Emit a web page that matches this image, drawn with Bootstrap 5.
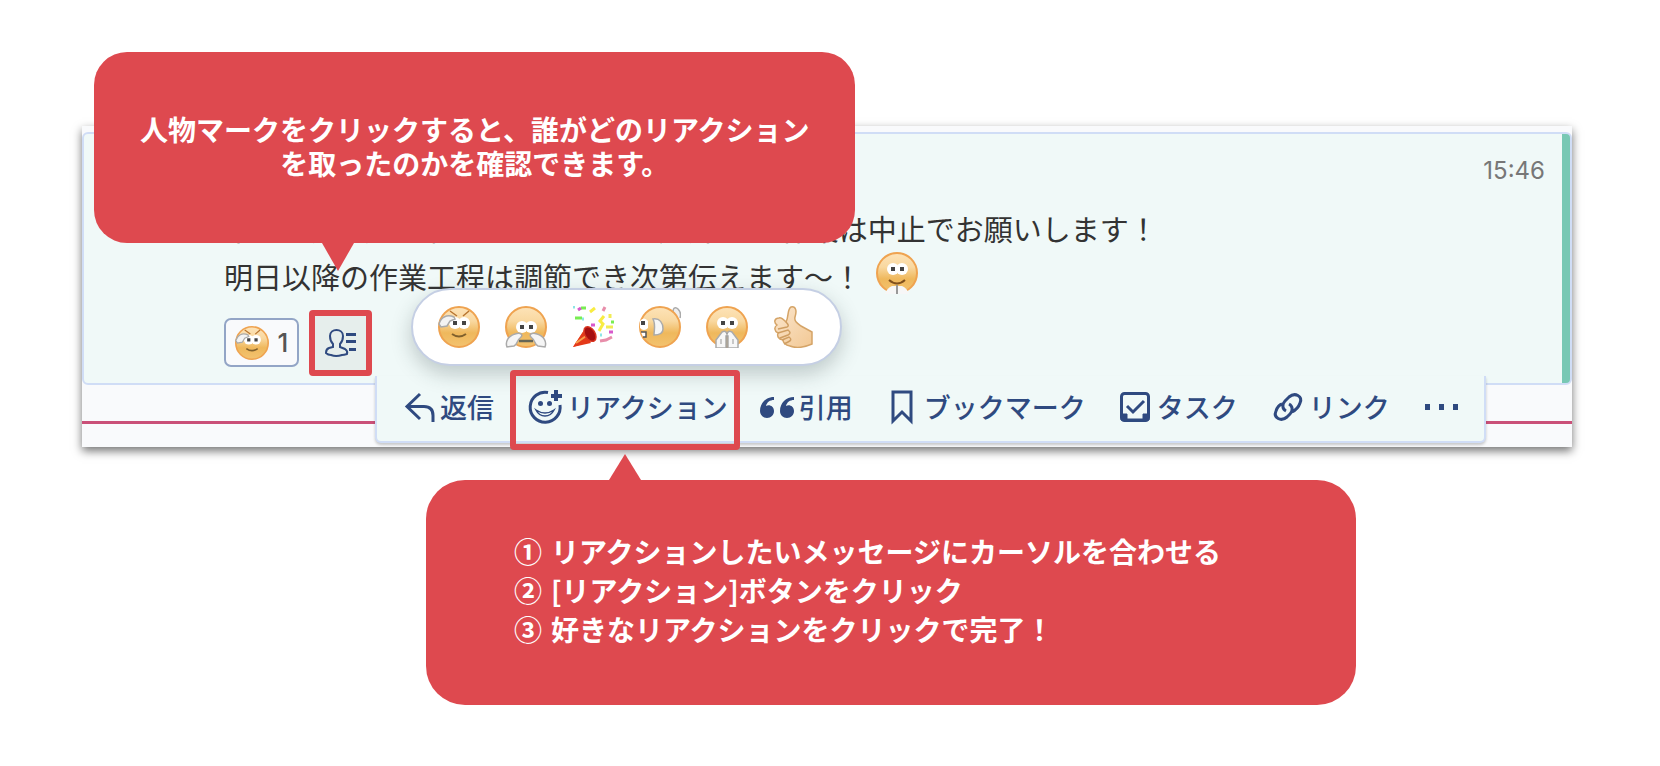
<!DOCTYPE html>
<html lang="ja">
<head>
<meta charset="utf-8">
<meta name="viewport" content="width=device-width, initial-scale=1">
<title>リアクションの使い方</title>
<link href="https://cdn.jsdelivr.net/npm/bootstrap@5.3.0/dist/css/bootstrap.min.css" rel="stylesheet">
<style>
  :root { --guide: #de494f; --ink: #2f4a80; --mint: #f0f9f8; --line: #d0ddf6; }
  body { font-family: "Liberation Sans", "Noto Sans CJK JP", sans-serif; background: #fff; color: #333; }
  .stage { padding: 126px 88px 62px 82px; }
  .shot { background: #f9fafc; box-shadow: 0 4px 9px rgba(0,0,0,.55); padding-top: 6px; }
  .message { border: 2px solid var(--line); border-radius: 6px; padding: 23px 25px 16px 140px;
    background: linear-gradient(#78c8b4, #78c8b4) right top / 8px 100% no-repeat, var(--mint); }
  .stamp { font: 24px/28px Inter, "Liberation Sans", sans-serif; color: #777; margin-bottom: 19px; }
  .message-text { font-size: 29px; line-height: 48px; margin-bottom: 18px; }
  .jp { font-family: "Noto Sans CJK JP", sans-serif; }
  .face { width: 42px; height: 42px; flex: none; }
  .inline-face { margin: -16px 0 0 7px; vertical-align: middle; }
  .reactions { gap: 16px; }
  .reaction { width: 75px; height: 49px; border: 2px solid #93a5c6; border-radius: 7px; background: #f9fafc;
    font: 500 26px/1 Inter, "Liberation Sans", sans-serif; color: #555; gap: 9px; }
  .reaction .face { width: 34px; height: 34px; }
  .people { width: 51px; height: 54px; margin: -2px 0 -3px; background: #e6eeec; border: 0; }
  .marked::after { content: ""; position: absolute; z-index: 4; border: 6px solid var(--guide); border-radius: 4px; pointer-events: none; }
  .people.marked::after { inset: -6px; }
  .tool.marked::after { inset: -6px -12px -9px -18px; }
  .picker { left: 187px; top: -30px; height: 78px; padding: 0 25px; gap: 25px; z-index: 3; background: #fff;
    border: 2px solid #c5cfe4; border-radius: 39px; box-shadow: 0 8px 20px rgba(40,60,60,.25); }
  .gap-zone { background: linear-gradient(#ca5078, #ca5078) 0 36px / 100% 3px no-repeat; padding: 0 0 4px 293px; }
  .tools { margin-top: -9px; height: 67px; padding: 0 24px 0 28px; gap: 34px; background: var(--mint);
    border: 2px solid var(--line); border-top: 0; border-radius: 0 0 6px 6px; box-shadow: 0 2px 3px rgba(0,0,0,.2); }
  .tool { color: var(--ink); font-size: 27px; font-weight: 500; line-height: 1; gap: 5px; white-space: nowrap; padding: 0 0 4px; }
  .tool svg, .people svg { overflow: visible; fill: none; stroke: var(--ink); stroke-width: 3; flex: none; }
  .people svg { stroke-width: 2; }
  .callout { background: var(--guide); color: #fff; font-weight: 700; font-size: 28px; }
  .callout::after { content: ""; position: absolute; border: solid transparent; border-width: 0 16px; }
  .callout-top { left: 12px; top: -74px; padding: 60px 46px 63px; border-radius: 33px; line-height: 34px; z-index: 5; white-space: nowrap; }
  .callout-top::after { left: 228px; top: 100%; border-top: 28px solid var(--guide); }
  .callout-steps { margin: 33px 0 0 344px; max-width: 930px; padding: 52px 88px 56px; border-radius: 39px; line-height: 39px; }
  .callout-steps::after { left: 183px; bottom: 100%; border-bottom: 26px solid var(--guide); }
  .callout-steps li { gap: 9px; }
</style>
</head>
<body>
<svg width="0" height="0" class="position-absolute" aria-hidden="true">
  <defs>
    <linearGradient id="skin" x1="0" y1="0" x2="0" y2="1"><stop offset="0" stop-color="#fde3b8"/><stop offset=".35" stop-color="#f9d8a0"/><stop offset=".65" stop-color="#efb85c"/><stop offset="1" stop-color="#f3c370"/></linearGradient>
    <linearGradient id="hand" x1="0" y1="0" x2="1" y2="1"><stop offset="0" stop-color="#fbe6cd"/><stop offset="1" stop-color="#f2c894"/></linearGradient>
    <g id="head"><circle cx="21" cy="21" r="20" fill="url(#skin)" stroke="#efa350" stroke-width="2"/></g>
    <g id="eyes"><circle cx="17" cy="17" r="6" fill="#fff"/><circle cx="26" cy="17" r="6" fill="#fff"/><path d="M15 15h4v4h-4zM24 15h4v4h-4z" fill="#444"/></g>
    <symbol id="salute" viewBox="0 0 42 42"><use href="#head"/><path d="M12 5l7 5M31 5l-6 5" stroke="#b87530" stroke-width="1.500" fill="none"/><use href="#eyes"/><path d="M1 18c2-7 8-10 15-7l1 2-5 2-3 5-6 1z" fill="#f3f3f3" stroke="#aaa" stroke-width="1.500"/><path d="M14 28q7 5 14 0" stroke="#80602c" stroke-width="2" fill="none"/></symbol>
    <symbol id="cry" viewBox="0 0 42 42"><use href="#head"/><g transform="translate(0 4)"><use href="#eyes"/></g><path d="M14 35h14" stroke="#665" stroke-width="2.500"/><path d="M2 41c-2-5 1-11 8-13 6-2 9 1 5 4-3 2-2 6-6 8zM40 41c2-5-1-11-8-13-6-2-9 1-5 4 3 2 2 6 6 8z" fill="#f5f5f5" stroke="#aaa" stroke-width="1.500"/></symbol>
    <symbol id="party" viewBox="0 0 42 42"><path d="M1 41L14 21q8 3 10 13z" fill="#ef5128"/><path d="M1 41L11 26l8 11z" fill="#e43919"/><path d="M4 37l13-9" stroke="#f7a04c" stroke-width="2"/><ellipse cx="18" cy="28" rx="5" ry="8" transform="rotate(-32 18 28)" fill="#a50f10" stroke="#d93420" stroke-width="1.500"/><g fill="none" stroke-width="3"><path d="M9 2h5M3 12h7" stroke="#78ed52"/><path d="M18 6l5-4M32 10l-4 5 3 3-4 7" stroke="#f8ec42"/><path d="M31 5l2-4M28 35l6-1 6-3" stroke="#e88eaa"/><path d="M6 4l3-2M19 19h4M37 26h4" stroke="#d859cc"/><path d="M38 8v4M34 21h7" stroke="#f1ec55"/><path d="M39 16h3" stroke="#78ed52"/><path d="M1 1h2M28 29h2M10 13h2" stroke="#8be6e5"/></g></symbol>
    <symbol id="gasp" viewBox="0 0 42 42"><path d="M34 6c0-5 3-5 5-3 3 3 3 6 2 9" fill="#eee" stroke="#aaa" stroke-width="1.500"/><use href="#head"/><path d="M1 15q4-5 8 0v7q-4 4-8 0z" fill="#fff"/><path d="M2 15h4v4H2z" fill="#444"/><path d="M2 26h5v5H4" fill="#fff" stroke="#555" stroke-width="1.500"/><path d="M14 13c7-1 10 4 10 10 0 4-3 6-9 6 0-5 2-10-1-16z" fill="#f6f6f6" stroke="#aaa" stroke-width="1.500"/></symbol>
    <symbol id="pray" viewBox="0 0 42 42"><use href="#head"/><use href="#eyes"/><path d="M10 42v-8l6-8q4-2 5 2 1-4 5-2l6 8v8H22V30h-2v12z" fill="#f7f7f7" stroke="#aaa" stroke-width="1.500"/><path d="M21 27v15M15 33v5M27 33v5" stroke="#999"/></symbol>
    <symbol id="please" viewBox="0 0 42 42"><use href="#head"/><use href="#eyes"/><path d="M13 28q8 7 16 0" stroke="#80501c" stroke-width="2" fill="none"/><path d="M9 42q2-6 7-8h4v8zM33 42q-2-6-7-8h-4v8z" fill="#f7f7f7"/><path d="M21 33v9" stroke="#999" stroke-width="2"/></symbol>
    <symbol id="thumb" viewBox="0 0 42 42"><path d="M13 16C16 11 14 3 18 1c5-1 6 4 4 10-1 4 2 6 6 9l11 6v12c-7 3-15 5-22 2-5-1-7-4-7-6-5-1-6-4-5-7-4-2-4-6-1-8-4-3-2-7 2-7 2-1 5 2 7 4z" fill="url(#hand)" stroke="#d5a467" stroke-width="1.500"/><path d="M13 16q4 4 1 5l-9 2M5 27l10-3q4 3 0 5l-8 3M9 34l7-3q4 3-1 5l-4 2" fill="none" stroke="#cf9e62" stroke-width="1.500"/></symbol>
  </defs>
</svg>

<main class="stage container-fluid">
  <section class="shot position-relative">
    <aside class="callout callout-top position-absolute text-center jp">人物マークをクリックすると、誰がどのリアクション<br>を取ったのかを確認できます。</aside>

    <article class="message">
      <time class="stamp d-block text-end">15:46</time>
      <p class="message-text jp text-nowrap">本日は天候が悪化しているため、屋外での 作業は中止でお願いします！<br>明日以降の作業工程は調節でき次第伝えます〜！ <svg class="face inline-face" role="img" aria-label="お願い"><use href="#please"/></svg></p>
      <div class="reactions d-flex position-relative">
        <button type="button" class="reaction d-flex align-items-center justify-content-center p-0"><svg class="face"><use href="#salute"/></svg>1</button>
        <button type="button" class="people marked position-relative p-0 d-flex align-items-center justify-content-center" aria-label="リアクションした人">
          <svg width="31" height="28" viewBox="0 0 31 28"><path d="M8 15C5 12 5 9 5 7c0-8 13-8 13 0 0 3-1 6-3 8v3l5 2q3 2 2 5-3 1-5 1-6 2-11 0-3 0-5-2 0-4 3-5l4-1z"/><path d="M21 5.500h10M21 12.500h10M24 20.500h7" stroke-width="3"/></svg>
        </button>
        <div class="picker position-absolute d-flex align-items-center">
          <button type="button" class="btn p-0 border-0 d-flex" aria-label="了解"><svg class="face"><use href="#salute"/></svg></button>
          <button type="button" class="btn p-0 border-0 d-flex" aria-label="泣く"><svg class="face"><use href="#cry"/></svg></button>
          <button type="button" class="btn p-0 border-0 d-flex" aria-label="おめでとう"><svg class="face"><use href="#party"/></svg></button>
          <button type="button" class="btn p-0 border-0 d-flex" aria-label="すごい"><svg class="face"><use href="#gasp"/></svg></button>
          <button type="button" class="btn p-0 border-0 d-flex" aria-label="ありがとう"><svg class="face"><use href="#pray"/></svg></button>
          <button type="button" class="btn p-0 border-0 d-flex" aria-label="いいね"><svg class="face"><use href="#thumb"/></svg></button>
        </div>
      </div>
    </article>

    <div class="gap-zone d-flex">
      <div class="tools d-flex align-items-stretch jp" role="toolbar" aria-label="メッセージ操作">
        <button type="button" class="tool bg-transparent border-0 d-flex align-items-center"><svg width="30" height="30"><path d="M15 2L2 14.500 15 27M2 14.500h17q9 0 9 9V30"/></svg>返信</button>
        <button type="button" class="tool marked position-relative bg-transparent border-0 d-flex align-items-center"><svg width="34" height="34"><path d="M20 2.500A15 15 0 1 0 32 15"/><path d="M8 20q9 6 18 0-3 6-9 6t-9-6z" stroke-width="1.500"/><g fill="#2f4a80" stroke="none"><circle cx="12.500" cy="13.500" r="2.500"/><circle cx="21.500" cy="13.500" r="2.500"/></g><path d="M28 0v11M23 6h11" stroke-width="4"/></svg>リアクション</button>
        <button type="button" class="tool bg-transparent border-0 d-flex align-items-center"><svg width="32" height="22"><g id="quo" fill="#2f4a80" stroke="none"><path d="M12 1C4 1-2 7-2 15c0 4 3 7 7 7s7-3 7-7c0-5-5-7-8-5 1-4 4-6 8-6z"/></g><use href="#quo" x="20"/></svg>引用</button>
        <button type="button" class="tool bg-transparent border-0 d-flex align-items-center"><svg width="32" height="34"><path d="M6 2h18v29l-9-9-9 9z"/></svg>ブックマーク</button>
        <button type="button" class="tool bg-transparent border-0 d-flex align-items-center"><svg width="32" height="30"><rect x="1.500" y="1.500" width="27" height="27" rx="3"/><path d="M7 14l6 6 11-11"/><path d="M1 22h6v5h16v-5h6v6H1z" fill="#2f4a80" stroke-width="1"/></svg>タスク</button>
        <button type="button" class="tool bg-transparent border-0 d-flex align-items-center"><svg width="32" height="30"><path d="M14 19c-4-2-4-7-1-10l4-4c6-5 14-1 11 6-1 3-4 7-8 9M17 12c4 2 4 7 1 10l-3 3c-6 5-14 1-11-6 1-3 3-6 6-7"/></svg>リンク</button>
        <button type="button" class="tool bg-transparent border-0 d-flex align-items-center" aria-label="その他"><svg width="36" height="6"><path d="M1 0h5v6H1zM15 0h5v6h-5zM29 0h5v6h-5z" fill="#2f4a80" stroke="none"/></svg></button>
      </div>
    </div>
  </section>

  <aside class="callout callout-steps position-relative jp">
    <ol class="list-unstyled m-0">
      <li class="d-flex"><span>①</span><span>リアクションしたいメッセージにカーソルを合わせる</span></li>
      <li class="d-flex"><span>②</span><span>[リアクション]ボタンをクリック</span></li>
      <li class="d-flex"><span>③</span><span>好きなリアクションをクリックで完了！</span></li>
    </ol>
  </aside>
</main>
<script src="https://cdn.jsdelivr.net/npm/bootstrap@5.3.0/dist/js/bootstrap.bundle.min.js"></script>
</body>
</html>
